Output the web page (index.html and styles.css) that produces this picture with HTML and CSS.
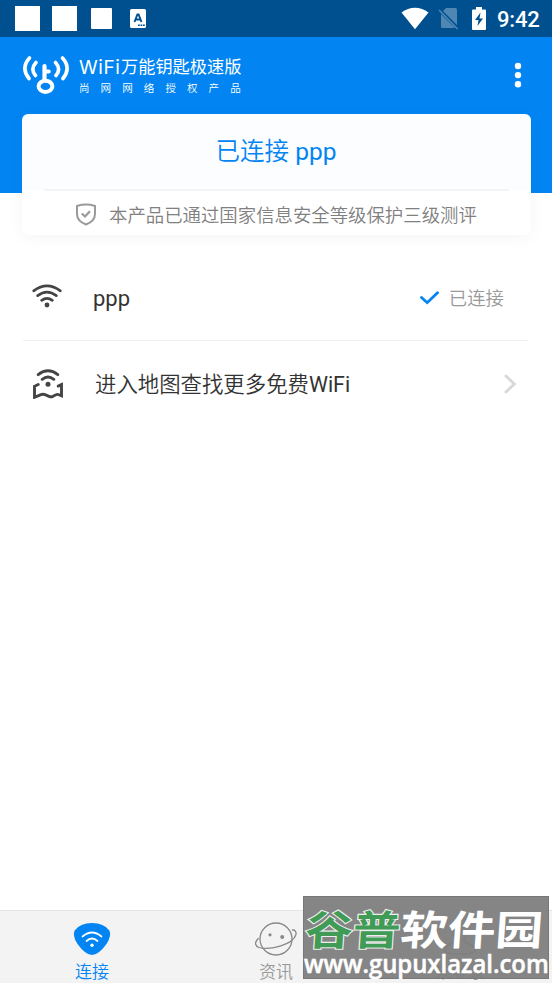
FILE: index.html
```html
<!DOCTYPE html>
<html lang="zh-CN">
<head>
<meta charset="utf-8">
<title>WiFi万能钥匙极速版</title>
<link rel="stylesheet" href="styles.css">
</head>
<body>
<div class="app">
  <header class="statusbar">
    <div class="notices">
      <i class="block"></i><i class="block"></i><i class="block small"></i>
      <svg class="ime" width="16" height="19" viewBox="0 0 16 19"><rect width="16" height="19" rx="1.5" fill="#fff"/><path d="M4.500 13 7.400 5.500h1.200L11.500 13M5.500 10.500h5" fill="none" stroke="#00508f" stroke-width="1.900"/><path d="M8 16.300h7" stroke="#00508f" stroke-width="1.400" stroke-dasharray="1.800 .7"/></svg>
    </div>
    <div class="system">
      <svg width="28" height="23" viewBox="0 0 28 23"><path d="M.5 5.500C8.500-.8 19.500-.8 27.500 5.500L14 22.300z" fill="#fff"/></svg>
      <svg class="nosim" width="21" height="23" viewBox="0 0 21 23"><path d="M8 1h9.500q1.500 0 1.500 1.500V18L5 4z" fill="#4f86b3"/><path d="M3 7 17 21H4.500Q3 21 3 19.500z" fill="#4f86b3"/><path d="m1 3 18.500 19" stroke="#4f86b3" stroke-width="1.700"/></svg>
      <svg class="battery" width="14" height="23" viewBox="0 0 14 23"><path d="M1 2.500h3V0h6v2.500h3q1 0 1 1V22q0 1-1 1H1q-1 0-1-1V3.500q0-1 1-1z" fill="#fff"/><path d="M8.500 5.500 3 13h3.500L5.500 19 11 11.500H7.500z" fill="#00508f"/></svg>
      <time>9:42</time>
    </div>
  </header>

  <section class="hero">
    <div class="brandbar">
      <svg class="logo" width="48" height="40" viewBox="0 0 48 40" fill="none" stroke="#fff" stroke-width="3.600" stroke-linecap="round"><path d="M7.500 4Q-1.500 14 7 24.500M14 8.500q-6 6.500-.5 13M40.500 4q9 10 .5 20.500M33.500 8.500q6 6.500.5 13"/><ellipse cx="23.500" cy="32.300" rx="6.900" ry="5.600" stroke-width="4"/><path d="M22.500 26V12M23 17.500h3.700" stroke-width="4.200"/></svg>
      <div class="brand">
        <div class="name"><span class="latin">WiFi</span>万能钥匙极速版</div>
        <div class="tagline">尚网网络授权产品</div>
      </div>
      <svg class="more" width="8" height="26" viewBox="0 0 8 26" fill="#fff"><circle cx="4" cy="4" r="3.200"/><circle cx="4" cy="13.100" r="3.200"/><circle cx="4" cy="22.300" r="3.200"/></svg>
    </div>
    <div class="card">
      <div class="state"><span class="cjk">已连接</span> ppp</div>
      <div class="cert">
        <svg width="22" height="23" viewBox="0 0 22 23" fill="none" stroke="#9a9a9a" stroke-width="2"><path d="M2 3Q11 .2 20 3v8q0 7-9 10.500Q2 18 2 11z"/><path d="m6.800 10.500 3.200 3 5-5.300" stroke-width="2.300"/></svg>
        <span class="cjk">本产品已通过国家信息安全等级保护三级测评</span>
      </div>
    </div>
  </section>

  <main class="list">
    <div class="row">
      <svg class="wifi" width="30" height="24" viewBox="0 0 30 24" fill="none" stroke="#444" stroke-width="2.700" stroke-linecap="round"><path d="M1.700 6.800Q15-3 28.300 6.800M5.700 11.600q9.300-7 18.600 0M9.700 16.300q5.300-3.800 10.600 0"/><circle cx="15" cy="21" r="2.400" fill="#444" stroke="none"/></svg>
      <span class="title">ppp</span>
      <svg class="check" width="19" height="14" viewBox="0 0 19 14"><path d="m1.500 6.500 5.700 5.200L17.500 1.700" fill="none" stroke="#0285f3" stroke-width="2.800" stroke-linecap="round"/></svg>
      <span class="status cjk">已连接</span>
    </div>
    <div class="row find">
      <svg class="map" width="30" height="30" viewBox="0 0 30 30" fill="none" stroke="#444" stroke-width="2.900" stroke-linecap="round"><path d="M5.200 5.600q9.800-7.500 19.600 0M9.200 10.300q5.800-4.400 11.600 0"/><path d="M5.200 15.500 1.500 17.300v11L8 25.600q2-.8 4 0l4 1.700q2 .8 4 0l3-1.500q1.500-.8 3 0l2.500 1V15.600l-3.300 1.500"/><circle cx="15" cy="15.300" r="2.500" fill="#444" stroke="none"/></svg>
      <span class="title"><span class="cjk">进入地图查找更多免费</span>WiFi</span>
      <svg class="chevron" width="13" height="20" viewBox="0 0 13 20"><path d="m2 2 8.300 8L2 18" fill="none" stroke="#d8d8d8" stroke-width="2.900" stroke-linecap="round"/></svg>
    </div>
  </main>

  <nav class="tabs">
    <div class="tab active">
      <svg width="42" height="34" viewBox="0 0 42 34"><path d="M21 1Q33 1 38.300 8.500Q41 13.500 35.500 22Q27.500 33 21 33T6.500 22Q1 13.500 3.700 8.500Q9 1 21 1z" fill="#0285f3"/><path d="M11.500 14.500q9.500-8 19 0M15.500 19q5.500-5 11 0" fill="none" stroke="#fff" stroke-width="1.700" stroke-linecap="round"/><circle cx="21" cy="23.200" r="1.700" fill="#fff"/></svg>
      <span class="cjk">连接</span>
    </div>
    <div class="tab">
      <svg width="42" height="34" viewBox="0 0 42 34" fill="none" stroke="#888" stroke-width="1.300" stroke-linecap="round"><circle cx="21" cy="17" r="16"/><path d="M3.300 16.500C-1 20.500 0 24 4 25.500C14 28.500 38 23 41 12.500Q41.500 7.800 37.500 8"/><circle cx="15" cy="12.800" r="1.600" fill="#888" stroke="none"/><circle cx="27.200" cy="15" r="2" fill="#888" stroke="none"/></svg>
      <span class="cjk">资讯</span>
    </div>
    <div class="tab">
      <svg width="42" height="34" viewBox="0 0 42 34" fill="none" stroke="#888" stroke-width="1.300"><path d="M17 16.500C11 12 14 2 21 2S31 12 25 16.500V20Q37 23 36 29Q35 32 21 32T6 29Q6 23 17 20z"/></svg>
      <span class="cjk">未登录</span>
    </div>
  </nav>

  <aside class="watermark">
    <div class="site"><b>谷普</b>软件园</div>
    <div class="url">www.gupuxlazal.com</div>
  </aside>
</div>
</body>
</html>
```
FILE: styles.css
```css
* { box-sizing: border-box; }
body { margin: 0; }
svg { display: block; flex: none; }

.app {
  position: relative;
  display: flex;
  flex-direction: column;
  width: 552px;
  height: 983px;
  overflow: hidden;
  background: #fff;
  font-family: Roboto, "Noto Sans CJK SC", sans-serif;
}
.cjk { font-family: "Noto Sans CJK SC", sans-serif; font-weight: 350; }

.statusbar {
  display: flex;
  justify-content: space-between;
  height: 37px;
  padding: 0 12px 0 15px;
  background: #00508f;
}
.notices, .system { display: flex; align-items: center; }
.block { width: 25px; height: 25px; margin-right: 12px; background: #fff; }
.block.small { width: 21px; height: 21px; margin: 0 18px 0 2px; border-radius: 1px; }
.system time { width: 43px; padding-top: 2px; color: #fff; font-size: 22px; font-weight: 500; line-height: 36px; white-space: nowrap; letter-spacing: -.2px; }
.nosim { margin-left: 9px; }
.battery { margin: 0 11px 0 13px; }

.hero {
  height: 199px;
  background: linear-gradient(#0285f3 156.500px, transparent 156.500px);
}
.brandbar { display: flex; height: 76.500px; padding: 17px 30px 0 22px; }
.brand { flex: 1; margin-left: 9px; color: #fff; white-space: nowrap; }
.name { display: flex; height: 26px; font-size: 17.200px; line-height: 27px; font-weight: 400; }
.latin { width: 42px; font-family: Inter, sans-serif; font-size: 19px; font-weight: 400; letter-spacing: .6px; }
.tagline { font-family: "Noto Sans CJK SC", sans-serif; font-weight: 350; font-size: 10.500px; line-height: 15px; letter-spacing: 11.100px; }
.more { margin-top: 8px; }

.card {
  width: 509px;
  height: 121.500px;
  margin-left: 21.500px;
  border-radius: 6px;
  background: linear-gradient(#fcfdff 76px, #fff 76px);
  box-shadow: 0 3px 16px rgba(0, 0, 0, .045);
}
.state {
  height: 77px;
  margin: 0 22px;
  border-bottom: 2px solid #f3f4f6;
  color: #0285f3;
  font-size: 24.500px;
  line-height: 71px;
  text-align: center;
}
.cert {
  display: flex;
  align-items: center;
  height: 48px;
  padding-left: 53.500px;
  color: #808080;
  font-size: 18.400px;
  white-space: nowrap;
}
.cert span { margin: 0 0 2px 12px; }

.list { padding: 19px 24px 0 23px; }
.row {
  display: flex;
  align-items: center;
  height: 86px;
  padding: 0 24px 0 9px;
  border-bottom: 1px solid #f1f1f1;
  color: #333;
  font-size: 22px;
}
.row .wifi { margin-bottom: 3px; }
.row .title { flex: 1; margin: 2px 0 0 31px; }
.row.find { height: 85px; padding: 0 11px 0 10px; border: 0; font-size: 21.400px; }
.row.find .title { margin: 0 0 2px 32px; }
.row .status { margin: 0 0 2px 10px; color: #999; font-size: 18.400px; }

.tabs {
  display: flex;
  height: 73px;
  margin-top: auto;
  border-top: 1px solid #e4e4e4;
  background: #f3f3f3;
}
.tab {
  display: flex;
  flex: 1;
  flex-direction: column;
  align-items: center;
  padding-top: 11px;
  color: #999;
  font-size: 17px;
  line-height: 24px;
}
.tab span { margin-top: 3px; }
.tab.active { color: #0285f3; }

.watermark {
  position: absolute;
  left: 303px;
  top: 896px;
  width: 246px;
  height: 83px;
  background: rgba(125, 125, 125, .94);
  border: 1px solid #777;
  color: #fff;
  white-space: nowrap;
}
.site {
  height: 55px;
  padding-left: 2px;
  font: 700 47.500px/62px "Noto Sans CJK SC", sans-serif;
  transform: skewX(-4deg) scaleY(.86);
}
.site b { color: #3f9b55; font-weight: 700; -webkit-text-stroke: 2.500px #eee; paint-order: stroke fill; }
.url {
  width: 272px;
  height: 26px;
  font: 600 25px/23px "Open Sans", sans-serif;
  -webkit-text-stroke: .5px #fff;
  transform: scaleX(.955);
  transform-origin: left;
}
```
